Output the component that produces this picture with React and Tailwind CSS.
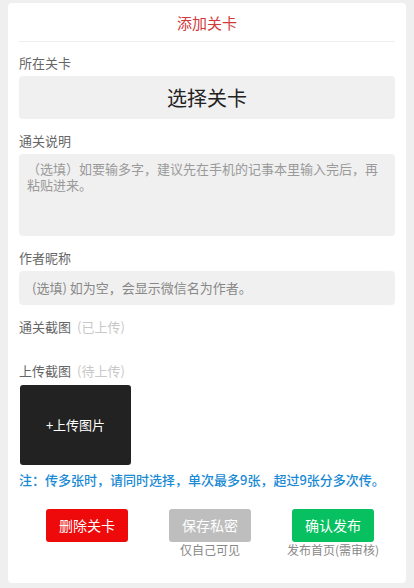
const font = { fontFamily: '"Noto Sans CJK SC", "Noto Sans", sans-serif' };

function Label({ children, note }) {
    return (
        <div className="h-[18px] flex items-center text-[13px] leading-[18px] text-[#666]">
            {children}
            {note && <span className="text-[#c8c8c8] ml-[6px]">{note}</span>}
        </div>
    );
}

const buttons = [
    { label: '删除关卡', bg: 'bg-[#ee0a0a]', caption: '' },
    { label: '保存私密', bg: 'bg-[#bebebe]', caption: '仅自己可见' },
    { label: '确认发布', bg: 'bg-[#07c160]', caption: '发布首页(需审核)' },
];

export default function App() {
    return (
        <div className="min-h-[588px] bg-[#efefef] pt-[3px] px-2 pb-[7px]" style={font}>
            <div className="bg-white rounded-[4px] px-[11px] pb-[26px]">
                <div className="h-[39px] pt-[3px] border-b border-[#eeeeee] flex items-center justify-center text-[15px] text-[#d23a3a]">
                    添加关卡
                </div>

                <div className="mt-[12px]">
                    <Label>所在关卡</Label>
                    <div className="mt-[4px] h-[43px] rounded-[4px] bg-[#f0f0f0] flex items-center justify-center text-[20px] text-[#222]">
                        选择关卡
                    </div>
                </div>

                <div className="mt-[13px]">
                    <Label>通关说明</Label>
                    <div className="mt-[4px] h-[82px] rounded-[4px] bg-[#f0f0f0] px-[8px] pt-[7px] text-[13px] leading-[16px] text-[#9a9a9a]">
                        （选填）如要输多字，建议先在手机的记事本里输入完后，再粘贴进来。
                    </div>
                </div>

                <div className="mt-[13px]">
                    <Label>作者昵称</Label>
                    <div className="mt-[4px] h-[34px] rounded-[4px] bg-[#f0f0f0] px-[13px] flex items-center text-[13px] text-[#888]">
                        (选填) 如为空，会显示微信名为作者。
                    </div>
                </div>

                <div className="mt-[13px]">
                    <Label note="(已上传)">通关截图</Label>
                </div>

                <div className="mt-[26px]">
                    <Label note="(待上传)">上传截图</Label>
                    <div className="mt-[5px] ml-px w-[111px] h-[80px] rounded-[3px] bg-[#222222] flex items-center justify-center text-[13px] text-white">
                        +上传图片
                    </div>
                </div>

                <div className="mt-[6px] text-[13px] leading-[18px] font-medium text-[#1a8ad4]">
                    注：传多张时，请同时选择，单次最多9张，超过9张分多次传。
                </div>

                <div className="mt-[20px] pl-[27px] flex gap-[41px]">
                    {buttons.map((b) => (
                        <div key={b.label} className="w-[82px] flex flex-col items-center">
                            <div className={`w-[82px] h-[33px] rounded-[3px] ${b.bg} flex items-center justify-center text-[14px] text-white`}>
                                {b.label}
                            </div>
                            <div className="h-[15px] leading-[15px] text-[12px] text-[#888] whitespace-nowrap">{b.caption}</div>
                        </div>
                    ))}
                </div>
            </div>
        </div>
    );
}
